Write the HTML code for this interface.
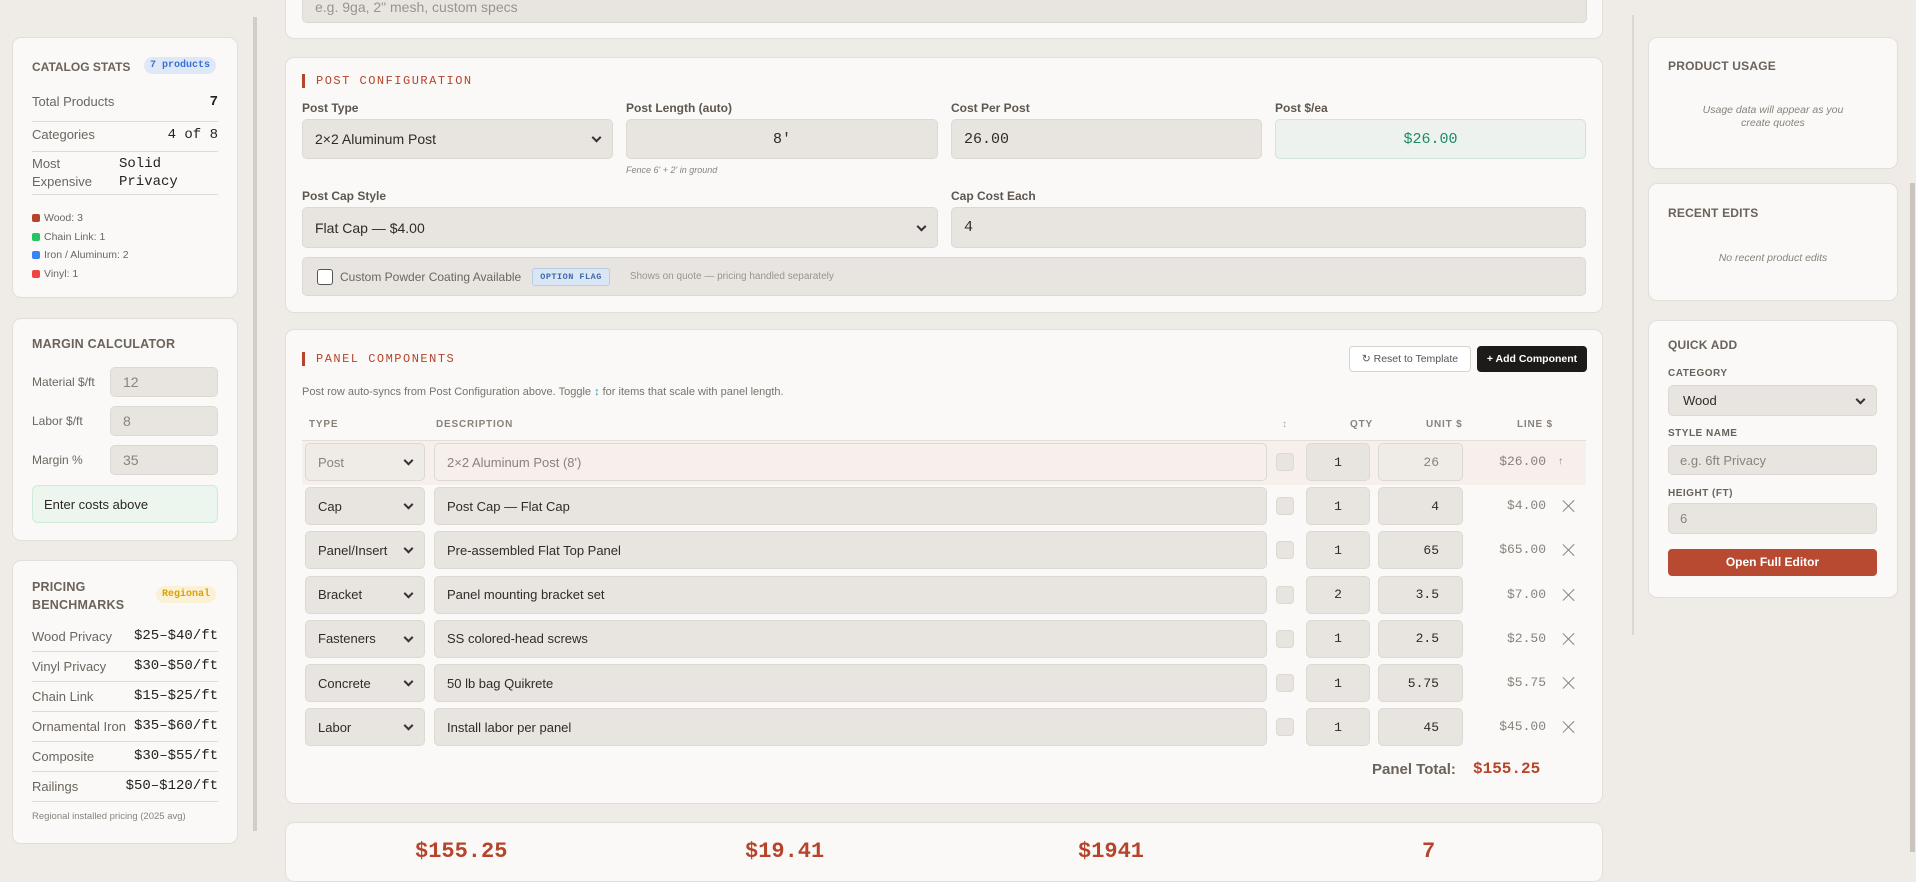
<!DOCTYPE html>
<html><head><meta charset="utf-8"><style>
*{box-sizing:border-box;margin:0;padding:0}
body{width:1916px;height:852px;overflow:hidden;background:#efece7;font-family:"Liberation Sans",sans-serif;color:#3a3633;position:relative}
.a{position:absolute}
.card{position:absolute;background:#faf9f7;border:1px solid #e2ded8;border-radius:9px}
.ttl{position:absolute;font-weight:bold;font-size:12.5px;color:#6b625b;letter-spacing:.2px}
.sec{position:absolute;font-family:"Liberation Mono",monospace;font-size:12px;color:#b5442b;letter-spacing:1.5px;border-left:3px solid #b5442b;padding-left:11px;line-height:14px}
.inp{position:absolute;background:#e8e5e0;border:1px solid #dcd8d2;border-radius:5px;font-size:14px;color:#2f2b28;display:flex;align-items:center;padding-left:12px}
.lbl{position:absolute;font-size:12px;color:#5e5650;font-weight:bold}
.row{position:absolute;left:32px;width:186px;font-size:13px;color:#6d655f;border-bottom:1px solid #dedad4}
.mono{font-family:"Liberation Mono",monospace}
.sel::after{content:"";position:absolute;right:12px;top:50%;width:5px;height:5px;border-right:2px solid #333;border-bottom:2px solid #333;transform:translateY(-70%) rotate(45deg)}
.dot{display:inline-block;width:8px;height:8px;border-radius:2px;margin-right:4px;vertical-align:-1px}
.hd{position:absolute;top:419px;font-size:10px;font-weight:bold;color:#8a827b;letter-spacing:.8px}
.x{position:absolute;left:1563px;width:12px;height:12px}
.x::before,.x::after{content:"";position:absolute;left:5px;top:-2px;width:1.3px;height:16px;background:#8a827b;transform:rotate(45deg)}
.x::after{transform:rotate(-45deg)}
.rl{position:absolute;font-size:10px;font-weight:bold;color:#6b625b;letter-spacing:.5px;left:1668px}
.pr{position:relative;left:0;height:30px;line-height:29px}
.pr span{position:absolute;right:0;color:#222;font-size:14px;font-family:"Liberation Mono",monospace}
</style></head><body>

<!-- left column -->
<div class="a" style="left:253px;top:17px;width:4px;height:814px;background:#d2cdc6"></div>

<div class="card" style="left:12px;top:37px;width:226px;height:261px"></div>
<div class="ttl" style="left:32px;top:60px;font-size:12px;letter-spacing:0">CATALOG STATS</div>
<div class="a mono" style="left:144px;top:57px;background:#dfe8f7;color:#3b6fd6;font-size:10px;padding:3px 6px;border-radius:9px;font-weight:bold">7 products</div>
<div class="row" style="top:94px;height:28px">Total Products<span class="mono" style="position:absolute;right:0;color:#222;font-size:14px;font-weight:bold">7</span></div>
<div class="row" style="top:124px;height:28px;padding-top:3px">Categories<span class="mono" style="position:absolute;right:0;color:#222;font-size:14px">4 of 8</span></div>
<div class="row" style="top:155px;height:40px;line-height:18px">Most<br>Expensive<span class="mono" style="position:absolute;left:87px;top:0;color:#222;font-size:14px;line-height:18px">Solid<br>Privacy</span></div>
<div class="a" style="left:32px;top:209px;font-size:10.5px;color:#6d655f;line-height:18.5px">
<div><span class="dot" style="background:#b5442b"></span>Wood: 3</div>
<div><span class="dot" style="background:#22c55e"></span>Chain Link: 1</div>
<div><span class="dot" style="background:#3b82f6"></span>Iron / Aluminum: 2</div>
<div><span class="dot" style="background:#ef4444"></span>Vinyl: 1</div></div>

<div class="card" style="left:12px;top:318px;width:226px;height:223px"></div>
<div class="ttl" style="left:32px;top:337px">MARGIN CALCULATOR</div>
<div class="a" style="left:32px;top:375px;font-size:12px;color:#6d655f">Material $/ft</div>
<div class="inp" style="left:110px;top:367px;width:108px;height:30px;color:#8a827b">12</div>
<div class="a" style="left:32px;top:414px;font-size:12px;color:#6d655f">Labor $/ft</div>
<div class="inp" style="left:110px;top:406px;width:108px;height:30px;color:#8a827b">8</div>
<div class="a" style="left:32px;top:453px;font-size:12px;color:#6d655f">Margin %</div>
<div class="inp" style="left:110px;top:445px;width:108px;height:30px;color:#8a827b">35</div>
<div class="a" style="left:32px;top:485px;width:186px;height:38px;background:#ecf6ef;border:1px solid #cdebd6;border-radius:6px;font-size:13px;color:#2b2724;padding:11px 0 0 11px">Enter costs above</div>

<div class="card" style="left:12px;top:560px;width:226px;height:284px"></div>
<div class="ttl" style="left:32px;top:578px;line-height:18px">PRICING<br>BENCHMARKS</div>
<div class="a mono" style="left:156px;top:586px;background:#fbf1d4;color:#d9a10b;font-size:10px;padding:3px 6px;border-radius:9px;font-weight:bold">Regional</div>
<div class="a" style="left:32px;top:622px;width:186px">
<div class="row pr">Wood Privacy<span>$25–$40/ft</span></div>
<div class="row pr">Vinyl Privacy<span>$30–$50/ft</span></div>
<div class="row pr">Chain Link<span>$15–$25/ft</span></div>
<div class="row pr">Ornamental Iron<span>$35–$60/ft</span></div>
<div class="row pr">Composite<span>$30–$55/ft</span></div>
<div class="row pr">Railings<span>$50–$120/ft</span></div>
</div>
<div class="a" style="left:32px;top:811px;font-size:9.5px;color:#8a827b">Regional installed pricing (2025 avg)</div>

<!-- main column -->
<div class="card" style="left:285px;top:-20px;width:1318px;height:59px"></div>
<div class="inp" style="left:302px;top:-16px;width:1285px;height:39px;color:#9a938c;padding-top:6px">e.g. 9ga, 2" mesh, custom specs</div>

<div class="card" style="left:285px;top:57px;width:1318px;height:256px"></div>
<div class="sec" style="left:302px;top:74px">POST CONFIGURATION</div>
<div class="lbl" style="left:302px;top:101px">Post Type</div>
<div class="inp sel" style="left:302px;top:119px;width:311px;height:40px">2×2 Aluminum Post</div>
<div class="lbl" style="left:626px;top:101px">Post Length (auto)</div>
<div class="inp mono" style="left:626px;top:119px;width:312px;height:40px;justify-content:center;padding:0;font-size:15px">8'</div>
<div class="a" style="left:626px;top:165px;font-size:9px;font-style:italic;color:#8a827b">Fence 6' + 2' in ground</div>
<div class="lbl" style="left:951px;top:101px">Cost Per Post</div>
<div class="inp mono" style="left:951px;top:119px;width:311px;height:40px;font-size:15px">26.00</div>
<div class="lbl" style="left:1275px;top:101px">Post $/ea</div>
<div class="inp mono" style="left:1275px;top:119px;width:311px;height:40px;justify-content:center;padding:0;background:#eef2ee;border-color:#cfe5da;color:#1f8a68;font-size:15px">$26.00</div>
<div class="lbl" style="left:302px;top:189px">Post Cap Style</div>
<div class="inp sel" style="left:302px;top:207px;width:636px;height:41px">Flat Cap — $4.00</div>
<div class="lbl" style="left:951px;top:189px">Cap Cost Each</div>
<div class="inp mono" style="left:951px;top:207px;width:635px;height:41px;font-size:15px">4</div>
<div class="inp" style="left:302px;top:257px;width:1284px;height:39px;padding-left:14px;font-size:12px;color:#6d655f">
<span style="width:16px;height:16px;border:1.5px solid #555;border-radius:3px;background:#fff;margin-right:7px"></span>Custom Powder Coating Available
<span class="mono" style="margin-left:11px;background:#dbe6f4;border:1px solid #b7cde9;color:#3e6aa8;font-size:8.5px;padding:3px 7px;border-radius:3px;font-weight:bold;letter-spacing:.5px">OPTION FLAG</span>
<span style="margin-left:20px;font-size:10px;color:#9a938c">Shows on quote — pricing handled separately</span></div>

<div class="card" style="left:285px;top:329px;width:1318px;height:475px"></div>
<div class="sec" style="left:302px;top:352px">PANEL COMPONENTS</div>
<div class="a" style="left:1349px;top:346px;width:122px;height:26px;border:1px solid #d8d3cc;border-radius:4px;background:#fff;font-size:10.5px;color:#555;text-align:center;line-height:24px">↻ Reset to Template</div>
<div class="a" style="left:1477px;top:346px;width:110px;height:26px;border-radius:4px;background:#1d1b19;font-size:10.5px;color:#fff;font-weight:bold;text-align:center;line-height:26px">+ Add Component</div>
<div class="a" style="left:302px;top:386px;font-size:11px;color:#7a726b">Post row auto-syncs from Post Configuration above. Toggle <span style="color:#2a9fb0">↕</span> for items that scale with panel length.</div>
<div class="hd" style="left:309px">TYPE</div>
<div class="hd" style="left:436px">DESCRIPTION</div>
<div class="hd" style="left:1282px;color:#aaa">↕</div>
<div class="hd" style="left:1350px">QTY</div>
<div class="hd" style="left:1426px">UNIT $</div>
<div class="hd" style="left:1517px">LINE $</div>
<div class="a" style="left:302px;top:440px;width:1284px;height:1.5px;background:#e2ded8"></div>
<div class="a" style="left:302px;top:441px;width:1284px;height:44px;background:#f6efeb"></div>

<div id="rows"></div>
<script>
var R=[["Post","2×2 Aluminum Post (8')","1","26","$26.00"],["Cap","Post Cap — Flat Cap","1","4","$4.00"],["Panel/Insert","Pre-assembled Flat Top Panel","1","65","$65.00"],["Bracket","Panel mounting bracket set","2","3.5","$7.00"],["Fasteners","SS colored-head screws","1","2.5","$2.50"],["Concrete","50 lb bag Quikrete","1","5.75","$5.75"],["Labor","Install labor per panel","1","45","$45.00"]];
var h="";R.forEach(function(r,i){var c=462+i*44.2,t=c-19,p=i==0;
var bg=p?"background:#efebe6;color:#8a827b;":"";
h+='<div class="inp sel" style="left:305px;top:'+t+'px;width:120px;height:38px;font-size:13px;'+bg+'">'+r[0]+'</div>';
h+='<div class="inp" style="left:434px;top:'+t+'px;width:833px;height:38px;font-size:13px;'+(p?"background:#f6efeb;color:#8a827b;":"")+'">'+r[1]+'</div>';
h+='<div class="a" style="left:1276px;top:'+(c-9)+'px;width:18px;height:18px;background:#e8e5e0;border:1px solid #dcd8d2;border-radius:4px"></div>';
h+='<div class="inp mono" style="left:1306px;top:'+t+'px;width:64px;height:38px;justify-content:center;padding:0;font-size:13px">'+r[2]+'</div>';
h+='<div class="inp mono" style="left:1378px;top:'+t+'px;width:85px;height:38px;justify-content:flex-end;padding:0 23px 0 0;font-size:13px;'+(p?"background:#efebe6;color:#8a827b;":"")+'">'+r[3]+'</div>';
h+='<div class="a mono" style="right:370px;top:'+(c-8)+'px;font-size:13px;color:#8a827b">'+r[4]+'</div>';
h+=p?'<div class="a" style="left:1558px;top:'+(c-6)+'px;font-size:10px;color:#8a827b">↑</div>':'<div class="x" style="top:'+(c-6)+'px"></div>';});
document.getElementById("rows").innerHTML=h;
</script>
<div class="a" style="left:1372px;top:761px;font-size:15px;font-weight:bold;color:#6b625b">Panel Total:</div>
<div class="a mono" style="left:1473px;top:760px;font-size:16px;font-weight:bold;color:#b5442b">$155.25</div>

<div class="card" style="left:285px;top:822px;width:1318px;height:60px"></div>
<div class="a mono" style="left:415px;top:839px;font-size:22px;font-weight:bold;color:#b5442b">$155.25</div>
<div class="a mono" style="left:745px;top:839px;font-size:22px;font-weight:bold;color:#b5442b">$19.41</div>
<div class="a mono" style="left:1078px;top:839px;font-size:22px;font-weight:bold;color:#b5442b">$1941</div>
<div class="a mono" style="left:1422px;top:839px;font-size:22px;font-weight:bold;color:#b5442b">7</div>

<!-- right column -->
<div class="a" style="left:1632px;top:15px;width:2px;height:620px;background:#dcd7d0"></div>
<div class="a" style="left:1910px;top:183px;width:5px;height:669px;background:#c9c4bd"></div>
<div class="card" style="left:1648px;top:37px;width:250px;height:132px"></div>
<div class="ttl" style="left:1668px;top:59px;font-size:12px">PRODUCT USAGE</div>
<div class="a" style="left:1648px;top:104px;width:250px;text-align:center;font-size:10.5px;font-style:italic;color:#8a827b;line-height:13px">Usage data will appear as you<br>create quotes</div>
<div class="card" style="left:1648px;top:183px;width:250px;height:118px"></div>
<div class="ttl" style="left:1668px;top:206px;font-size:12px">RECENT EDITS</div>
<div class="a" style="left:1648px;top:252px;width:250px;text-align:center;font-size:10.5px;font-style:italic;color:#8a827b">No recent product edits</div>
<div class="card" style="left:1648px;top:320px;width:250px;height:278px"></div>
<div class="ttl" style="left:1668px;top:338px;font-size:12px">QUICK ADD</div>
<div class="rl" style="top:368px">CATEGORY</div>
<div class="inp sel" style="left:1668px;top:385px;width:209px;height:31px;font-size:13px;padding-left:14px">Wood</div>
<div class="rl" style="top:428px">STYLE NAME</div>
<div class="inp" style="left:1668px;top:445px;width:209px;height:30px;font-size:13px;color:#8a827b;padding-left:11px">e.g. 6ft Privacy</div>
<div class="rl" style="top:488px">HEIGHT (FT)</div>
<div class="inp" style="left:1668px;top:503px;width:209px;height:31px;font-size:13px;color:#8a827b;padding-left:11px">6</div>
<div class="a" style="left:1668px;top:549px;width:209px;height:27px;background:#b94a32;border-radius:4px;color:#fff;font-size:12px;font-weight:bold;text-align:center;line-height:27px">Open Full Editor</div>
</body></html>
